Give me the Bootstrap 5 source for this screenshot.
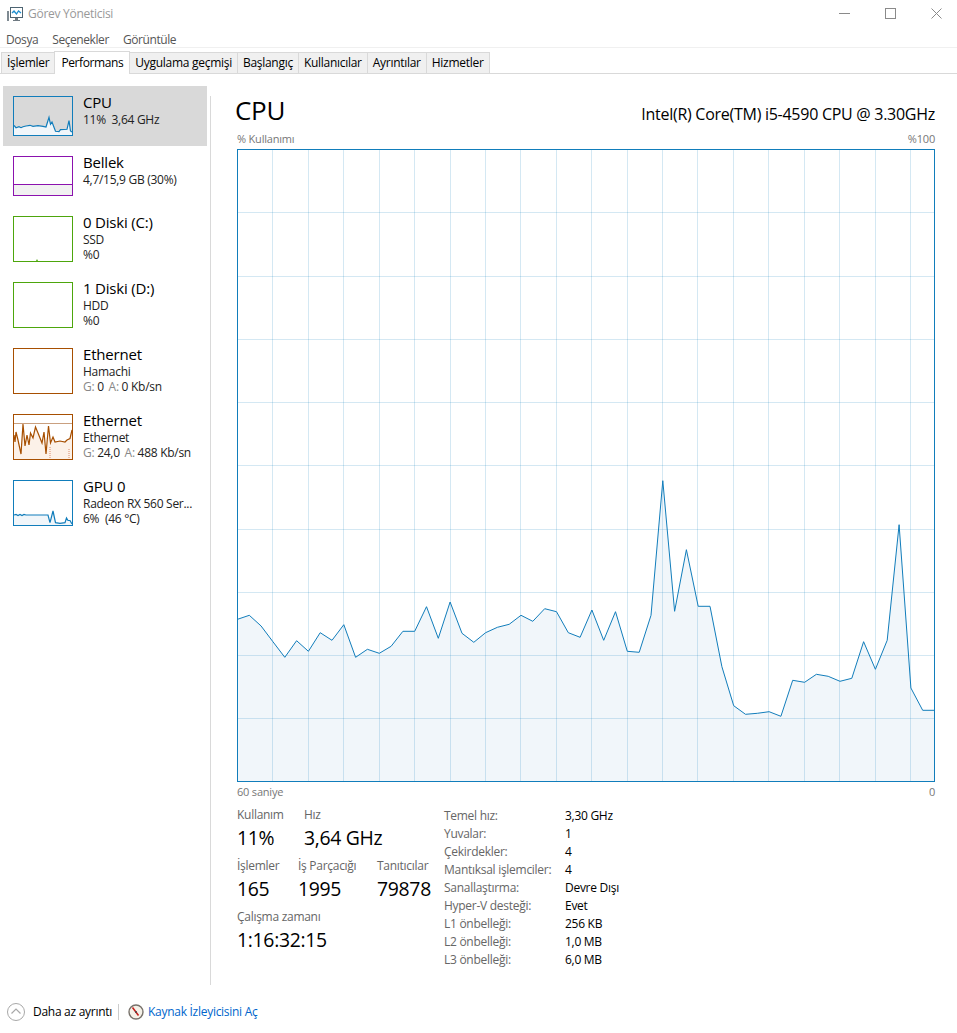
<!DOCTYPE html>
<html lang="tr">
<head>
  <meta charset="UTF-8">
  <title>Görev Yöneticisi</title>
  <link href="https://cdn.jsdelivr.net/npm/bootstrap@5.3.0/dist/css/bootstrap.min.css" rel="stylesheet">
  <style>
    html, body { height: 100%; }
    body {
      font-family: "Open Sans", "Noto Sans", sans-serif;
      font-size: 12px;
      line-height: 18px;
      color: #000;
      background: #fff;
      letter-spacing: -.28px;
      overflow: hidden;
    }
    .app-shell { width: 957px; height: 1033px; }
    .title-bar { height: 28px; padding-left: 7px; color: #999; }
    .title-bar .app-title { margin-left: 5px; }
    .win-group { margin-right: -2px; align-self: flex-start; }
    .win-btn { width: 46px; height: 26px; }
    .menu-bar { height: 20px; padding: 4px 0 0 6px; gap: 14px; color: #555; border-bottom: 1px solid #f0f0f0; letter-spacing: -.42px; }
    .tab-strip { height: 26px; padding-left: 2px; border-bottom: 1px solid #d9d9d9; align-items: flex-end; }
    .tab-item {
      height: 21px;
      padding: 0 5px;
      line-height: 20px;
      background: #f0f0f0;
      border: 1px solid #d9d9d9;
      border-bottom: 0;
      margin-left: -1px;
      color: #000;
    }
    .tab-item.is-active {
      height: 23px;
      margin-bottom: -1px;
      padding: 0 6px;
      line-height: 21px;
      letter-spacing: -.4px;
      background: #fff;
      position: relative;
      z-index: 1;
    }
    .perf-body { height: 911px; }
    .side-list { width: 204px; margin-left: 3px; padding-top: 12px; flex: none; }
    .side-row { height: 66px; padding: 10px 0 0 10px; gap: 10px; }
    .side-row.is-short { height: 60px; }
    .side-row.is-active { background: #d9d9d9; }
    .thumb { width: 60px; height: 46px; display: block; flex: none; }
    .is-short .thumb { height: 40px; }
    .side-name { font-size: 15px; line-height: 15px; margin-top: -1px; letter-spacing: -.2px; }
    .side-sub { line-height: 15px; margin-top: 2px; color: #222; }
    .side-row .side-sub + .side-sub { margin-top: 0; }
    .dim { color: #888; }
    .dim-gap { margin-left: 2px; }
    .split-line { width: 1px; margin: 22px 0 0 3px; height: 889px; background: #d9d9d9; flex: none; }
    .main-pane { padding: 12px 0 0 26px; width: 724px; flex: none; }
    .cpu-head { height: 44px; }
    .cpu-big { font-size: 26px; line-height: 36px; letter-spacing: -.3px; margin-left: -2px; padding-top: 6px; }
    .cpu-model { font-size: 16px; line-height: 20px; padding-top: 18px; letter-spacing: -.27px; }
    .axis-row { height: 19px; line-height: 18px; font-size: 11px; color: #777; width: 698px; letter-spacing: -.2px; }
    .axis-row.is-bottom { height: 13px; line-height: 13px; margin-top: 3px; }
    .graph-box { width: 698px; height: 633px; display: block; }
    .stats-area { width: 698px; padding-top: 9px; }
    .stat-cols { width: 207px; }
    .stat-block { margin-top: 6px; }
    .stat-label { color: #666; line-height: 16px; }
    .stat-value { font-size: 19.4px; line-height: 28px; padding-top: 1px; letter-spacing: -.3px; }
    .stat-w61 { width: 61px; }
    .stat-w67 { width: 67px; }
    .stat-w79 { width: 79px; }
    .spec-grid { width: 230px; color: #666; line-height: 18px; }
    .spec-grid .spec-key { width: 121px; flex: none; }
    .spec-grid .spec-val { color: #000; }
    .foot-bar { height: 48px; padding: 6px 0 0 7px; }
    .foot-sep { width: 1px; height: 16px; background: #ccc; margin: 0 9px 0 6px; }
    .foot-link { color: #0066cc; text-decoration: none; }
  </style>
</head>
<body>
  <div class="app-shell d-flex flex-column">

    <div class="title-bar d-flex align-items-center">
      <svg width="16" height="15" viewBox="0 0 16 15">
        <rect x="0" y="4" width="2" height="10" fill="#7f8a92"/>
        <rect x="3.5" y=".5" width="12" height="10" fill="#fff" stroke="#4d6472"/>
        <polyline points="5,6 7,4 9.5,7 11.5,4 14,6" fill="none" stroke="#1f8fd0" stroke-width="1.3"/>
        <rect x="8" y="11" width="3" height="2" fill="#6f7a82"/>
        <rect x="6" y="13" width="7" height="1" fill="#6f7a82"/>
      </svg>
      <span class="app-title">Görev Yöneticisi</span>
      <div class="ms-auto d-flex win-group">
        <div class="win-btn d-flex align-items-center justify-content-center">
          <svg width="11" height="11"><line x1="0" y1="5.5" x2="11" y2="5.5" stroke="#8a8a8a"/></svg>
        </div>
        <div class="win-btn d-flex align-items-center justify-content-center">
          <svg width="11" height="11"><rect x=".5" y=".5" width="10" height="10" fill="none" stroke="#8a8a8a"/></svg>
        </div>
        <div class="win-btn d-flex align-items-center justify-content-center">
          <svg width="11" height="11"><path d="M.5.5l10 10M10.5.5l-10 10" stroke="#8a8a8a" fill="none"/></svg>
        </div>
      </div>
    </div>

    <div class="menu-bar d-flex align-items-center">
      <span>Dosya</span><span>Seçenekler</span><span>Görüntüle</span>
    </div>

    <div class="tab-strip d-flex">
      <div class="tab-item">İşlemler</div>
      <div class="tab-item is-active">Performans</div>
      <div class="tab-item">Uygulama geçmişi</div>
      <div class="tab-item">Başlangıç</div>
      <div class="tab-item">Kullanıcılar</div>
      <div class="tab-item">Ayrıntılar</div>
      <div class="tab-item">Hizmetler</div>
    </div>

    <div class="perf-body d-flex">
      <div class="side-list">
        <div class="side-row is-short is-active d-flex">
          <svg class="thumb" id="thumbCpu" viewBox="0 0 60 40"></svg>
          <div>
            <div class="side-name">CPU</div>
            <div class="side-sub">11%&nbsp; 3,64 GHz</div>
          </div>
        </div>
        <div class="side-row is-short d-flex">
          <svg class="thumb" viewBox="0 0 60 40">
            <rect x=".5" y="28" width="59" height="11.5" fill="#f1f1f1"/>
            <line x1="0" y1="28.5" x2="60" y2="28.5" stroke="#8b12ae"/>
            <rect x=".5" y=".5" width="59" height="39" fill="none" stroke="#8b12ae"/>
          </svg>
          <div>
            <div class="side-name">Bellek</div>
            <div class="side-sub">4,7/15,9 GB (30%)</div>
          </div>
        </div>
        <div class="side-row d-flex">
          <svg class="thumb" viewBox="0 0 60 46">
            <path d="M23 45l1-2 1 2z" fill="#4da60c"/>
            <rect x=".5" y=".5" width="59" height="45" fill="none" stroke="#4da60c"/>
          </svg>
          <div>
            <div class="side-name">0 Diski (C:)</div>
            <div class="side-sub">SSD</div>
            <div class="side-sub">%0</div>
          </div>
        </div>
        <div class="side-row d-flex">
          <svg class="thumb" viewBox="0 0 60 46">
            <rect x=".5" y=".5" width="59" height="45" fill="none" stroke="#4da60c"/>
          </svg>
          <div>
            <div class="side-name">1 Diski (D:)</div>
            <div class="side-sub">HDD</div>
            <div class="side-sub">%0</div>
          </div>
        </div>
        <div class="side-row d-flex">
          <svg class="thumb" viewBox="0 0 60 46">
            <rect x=".5" y=".5" width="59" height="45" fill="none" stroke="#a74f01"/>
          </svg>
          <div>
            <div class="side-name">Ethernet</div>
            <div class="side-sub">Hamachi</div>
            <div class="side-sub"><span class="dim">G:</span> 0 <span class="dim dim-gap">A:</span> 0 Kb/sn</div>
          </div>
        </div>
        <div class="side-row d-flex">
          <svg class="thumb" id="thumbNet" viewBox="0 0 60 46"></svg>
          <div>
            <div class="side-name">Ethernet</div>
            <div class="side-sub">Ethernet</div>
            <div class="side-sub"><span class="dim">G:</span> 24,0 <span class="dim dim-gap">A:</span> 488 Kb/sn</div>
          </div>
        </div>
        <div class="side-row d-flex">
          <svg class="thumb" id="thumbGpu" viewBox="0 0 60 46"></svg>
          <div>
            <div class="side-name">GPU 0</div>
            <div class="side-sub">Radeon RX 560 Ser...</div>
            <div class="side-sub">6%&nbsp; (46 °C)</div>
          </div>
        </div>
      </div>

      <div class="split-line"></div>

      <div class="main-pane">
        <div class="cpu-head d-flex justify-content-between">
          <div class="cpu-big">CPU</div>
          <div class="cpu-model">Intel(R) Core(TM) i5-4590 CPU @ 3.30GHz</div>
        </div>
        <div class="axis-row d-flex justify-content-between"><span>% Kullanımı</span><span>%100</span></div>
        <svg class="graph-box" id="mainGraph" viewBox="0 0 698 633"></svg>
        <div class="axis-row is-bottom d-flex justify-content-between"><span>60 saniye</span><span>0</span></div>

        <div class="stats-area d-flex">
          <div class="stat-cols">
            <div class="d-flex">
              <div class="stat-w67"><div class="stat-label">Kullanım</div><div class="stat-value">11%</div></div>
              <div><div class="stat-label">Hız</div><div class="stat-value">3,64 GHz</div></div>
            </div>
            <div class="d-flex stat-block">
              <div class="stat-w61"><div class="stat-label">İşlemler</div><div class="stat-value">165</div></div>
              <div class="stat-w79"><div class="stat-label">İş Parçacığı</div><div class="stat-value">1995</div></div>
              <div><div class="stat-label">Tanıtıcılar</div><div class="stat-value">79878</div></div>
            </div>
            <div class="stat-block">
              <div class="stat-label">Çalışma zamanı</div>
              <div class="stat-value">1:16:32:15</div>
            </div>
          </div>
          <div class="spec-grid">
            <div class="d-flex"><div class="spec-key">Temel hız:</div><div class="spec-val">3,30 GHz</div></div>
            <div class="d-flex"><div class="spec-key">Yuvalar:</div><div class="spec-val">1</div></div>
            <div class="d-flex"><div class="spec-key">Çekirdekler:</div><div class="spec-val">4</div></div>
            <div class="d-flex"><div class="spec-key">Mantıksal işlemciler:</div><div class="spec-val">4</div></div>
            <div class="d-flex"><div class="spec-key">Sanallaştırma:</div><div class="spec-val">Devre Dışı</div></div>
            <div class="d-flex"><div class="spec-key">Hyper-V desteği:</div><div class="spec-val">Evet</div></div>
            <div class="d-flex"><div class="spec-key">L1 önbelleği:</div><div class="spec-val">256 KB</div></div>
            <div class="d-flex"><div class="spec-key">L2 önbelleği:</div><div class="spec-val">1,0 MB</div></div>
            <div class="d-flex"><div class="spec-key">L3 önbelleği:</div><div class="spec-val">6,0 MB</div></div>
          </div>
        </div>
      </div>
    </div>

    <div class="foot-bar d-flex align-items-center">
      <svg width="18" height="18" viewBox="0 0 18 18" class="me-2">
        <circle cx="9" cy="9" r="8.5" fill="#fff" stroke="#a8a8a8"/>
        <polyline points="4.5,10.5 9,6 13.5,10.5" fill="none" stroke="#a8a8a8" stroke-width="1.2"/>
      </svg>
      <span>Daha az ayrıntı</span>
      <div class="foot-sep"></div>
      <svg width="16" height="16" viewBox="0 0 16 16" class="me-1">
        <circle cx="8" cy="8" r="7" fill="#f5f1e8" stroke="#77716a" stroke-width="1.4"/>
        <line x1="4.5" y1="3.5" x2="10.5" y2="11.5" stroke="#c8201c" stroke-width="1.6"/>
        <circle cx="8" cy="8" r="1" fill="#444"/>
      </svg>
      <a class="foot-link" href="#">Kaynak İzleyicisini Aç</a>
    </div>
  </div>

  <script src="https://cdn.jsdelivr.net/npm/bootstrap@5.3.0/dist/js/bootstrap.bundle.min.js"></script>
  <script>
    const NS = 'http://www.w3.org/2000/svg';

    function addTo(svg, tag, attrs) {
      const el = document.createElementNS(NS, tag);
      Object.keys(attrs).forEach(k => el.setAttribute(k, attrs[k]));
      svg.appendChild(el);
    }

    // y values read off the reference, in absolute page pixels
    const cpuY = [619.3,615.3,626,641.7,657.3,640.7,651.3,632.7,640.3,624.7,657.3,649.3,653.3,646.3,631.3,631.3,606.7,638.3,602,633.3,642.3,632.7,627.3,624.3,615.3,621.3,608.7,611.7,632.7,637.3,
      610,640.3,611.7,651.3,652.3,615.3,480.7,611.3,549.7,606.3,606.3,666.7,705.7,714.3,713.3,711.7,716.3,680.3,682.3,674.3,676.3,681.3,678.3,641.7,669.3,640.3,524.7,688,710.3,710.3];

    function drawMain() {
      const svg = document.getElementById('mainGraph');
      const step = 697 / 59;
      const pts = cpuY.map((y, i) => (0.5 + i * step).toFixed(1) + ',' + (y - 149).toFixed(1));
      addTo(svg, 'polygon', { points: '0.5,632 ' + pts.join(' ') + ' 697.5,632', fill: '#f1f6fa' });
      for (let i = 1; i < 20; i++) {
        const x = Math.round(i * 35.42) + 0.5;
        addTo(svg, 'line', { x1: x, y1: 0, x2: x, y2: 633, stroke: '#117dbb', 'stroke-opacity': .18 });
      }
      for (let i = 1; i < 10; i++) {
        const y = Math.round(i * 63.25) + 0.5;
        addTo(svg, 'line', { x1: 0, y1: y, x2: 698, y2: y, stroke: '#117dbb', 'stroke-opacity': .18 });
      }
      addTo(svg, 'polyline', { points: pts.join(' '), fill: 'none', stroke: '#117dbb', 'stroke-width': 1 });
      addTo(svg, 'rect', { x: .5, y: .5, width: 697, height: 632, fill: 'none', stroke: '#117dbb' });
    }

    function drawThumb(id, w, h, color, fill, pts, extra) {
      const svg = document.getElementById(id);
      const line = pts.map(p => p.join(',')).join(' ');
      addTo(svg, 'polygon', { points: '1,' + (h - 1) + ' ' + line + ' ' + (w - 1) + ',' + (h - 1), fill: fill });
      if (extra) extra(svg);
      addTo(svg, 'polyline', { points: line, fill: 'none', stroke: color, 'stroke-width': 1.2 });
      addTo(svg, 'rect', { x: .5, y: .5, width: w - 1, height: h - 1, fill: 'none', stroke: color });
    }

    drawMain();
    drawThumb('thumbCpu', 60, 40, '#117dbb', '#f1f6fa', [[1,29.3],[3,31.7],[6,30.7],[8,31.7],[10,30.7],[13,30],[17,29.3],[20,30.3],[25,29.6],[30,30.3],[33,31],[36,21.3],[37.5,28.3],[39,26],[42.5,35.3],[46,35.7],[47.5,33.7],[54,33.3],[56,24.7],[57.5,35],[59,36]]);
    drawThumb('thumbNet', 60, 46, '#a74f01', '#fcf1e8', [[1,21],[2,28],[3,18],[5,26],[8,40],[10,10],[12,32],[14,21],[16,31],[17.5,19],[20,24],[22.5,13],[25,19],[27,24],[29,29],[31,18],[33,40],[35.5,12],[37.5,29],[40,23],[42,28],[47,27],[52,28],[54,26],[57,24.5],[59,16]], svg => {
      addTo(svg, 'line', { x1: 1, y1: 9.5, x2: 59, y2: 9.5, stroke: '#c9a080' });
      addTo(svg, 'line', { x1: 37, y1: 33, x2: 37, y2: 45, stroke: '#d98a6a', 'stroke-dasharray': '1 1' });
      addTo(svg, 'line', { x1: 56, y1: 35, x2: 56, y2: 45, stroke: '#d98a6a', 'stroke-dasharray': '1 1' });
    });
    drawThumb('thumbGpu', 60, 46, '#117dbb', '#f1f6fa', [[1,35],[3,34.5],[5,35.5],[7,34.5],[9,35.5],[11,34.5],[13,35],[32,35],[35,35],[37,42.7],[40,31],[42.5,42.7],[47,43.3],[52,42.7],[53.5,38],[55,40.5],[57,40.5],[59,44]]);
  </script>
</body>
</html>
